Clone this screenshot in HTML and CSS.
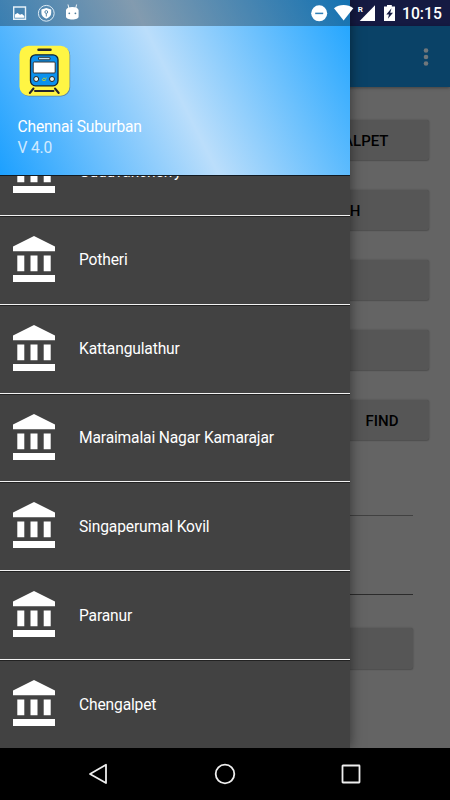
FILE: index.html
```html
<!DOCTYPE html>
<html lang="en">
<head>
    <meta charset="UTF-8">
    <meta name="viewport" content="width=device-width, initial-scale=1.0">
    <title>Chennai Suburban</title>
    <link rel="stylesheet" href="styles.css">
</head>
<body>

    <!-- shared icon for the station rows -->
    <svg class="defs" width="0" height="0">
        <symbol id="station" viewBox="0 0 42 46">
            <path d="M21 0L42 10.500V15.300H0V10.500ZM4.300 19.500H11.300V35.300H4.300ZM17.500 19.500H24.500V35.300H17.500ZM30.700 19.500H37.700V35.300H30.700ZM0 39H42V46H0Z"/>
        </symbol>
    </svg>

    <div class="screen">
        <div class="page">
            <div class="status-bg"></div>
            <div class="appbar">
                <svg width="6" height="20" viewBox="0 0 6 20">
                    <circle cx="3" cy="3.500" r="2.300"/>
                    <circle cx="3" cy="10" r="2.300"/>
                    <circle cx="3" cy="16.500" r="2.300"/>
                </svg>
            </div>
            <div class="content">
                <button class="btn"><span class="to">CHENGALPET</span></button>
                <button class="btn"><span class="search">SEARCH</span></button>
                <button class="btn"></button>
                <button class="btn"></button>
                <button class="btn"><span class="find">FIND</span></button>
                <div class="field soft"></div>
                <div class="field"></div>
                <button class="btn wide"></button>
            </div>
        </div>

        <div class="drawer">
            <div class="drawer-header">
                <svg class="logo" width="52" height="52" viewBox="0 0 52 52">
                    <rect x="1.200" y="1.400" width="50" height="50" rx="9" fill="#5c7180" opacity=".7"/>
                    <rect x=".5" y=".7" width="50" height="50" rx="9" fill="#fff544"/>
                    <path d="M19.500 4.800H31.500" stroke="#25252b" stroke-width="2.500" stroke-linecap="round"/>
                    <rect x="11.500" y="9.800" width="27.500" height="31" rx="5" fill="#0b91ee" stroke="#15242f" stroke-width="1.300"/>
                    <rect x="19.500" y="12.300" width="11.500" height="2.500" rx=".7" fill="#c9e4ee" stroke="#222" stroke-width=".9"/>
                    <rect x="14.200" y="17" width="22" height="11" rx="1" fill="#fff" stroke="#333" stroke-width="1"/>
                    <circle cx="17.200" cy="34" r="2.500" fill="#e9f4ee" stroke="#222" stroke-width="1"/>
                    <circle cx="33" cy="34" r="2.500" fill="#e9f4ee" stroke="#222" stroke-width="1"/>
                    <path d="M23 35L25 32.800L26.500 34.500L27.300 32.500M23.500 35.500H26.500" fill="none" stroke="#a5c94a" stroke-width="1"/>
                    <path d="M14.500 43.500L10.800 48M36 43.500L39.700 48M16 46H34.500" fill="none" stroke="#25252b" stroke-width="2" stroke-linecap="round"/>
                </svg>
                <div class="app-name">Chennai Suburban</div>
                <div class="version">V 4.0</div>
            </div>
            <div class="stations">
                <div class="station"><svg><use href="#station"/></svg><span>Guduvancherry</span></div>
                <div class="station"><svg><use href="#station"/></svg><span>Potheri</span></div>
                <div class="station"><svg><use href="#station"/></svg><span>Kattangulathur</span></div>
                <div class="station"><svg><use href="#station"/></svg><span>Maraimalai Nagar Kamarajar</span></div>
                <div class="station"><svg><use href="#station"/></svg><span>Singaperumal Kovil</span></div>
                <div class="station"><svg><use href="#station"/></svg><span>Paranur</span></div>
                <div class="station"><svg><use href="#station"/></svg><span>Chengalpet</span></div>
            </div>
        </div>

        <div class="statusbar">
            <svg width="80" height="26" viewBox="0 0 80 26">
                <path d="M13.700 7H25.500V19.300H13.700Z" fill="none" stroke="#e4f0f8" stroke-width="1.400"/>
                <path d="M15 17.800V14.500L17.500 13L20 14.700L22 14L24.300 16V17.800Z" fill="#fff"/>
                <circle cx="46.300" cy="13.300" r="7.900" fill="none" stroke="#dcebf5" stroke-width="1"/>
                <path d="M46.300 8L51.200 9.500V13C51.200 15.800 49 17.500 46.300 18.800C43.600 17.500 41.400 15.800 41.400 13V9.500Z" fill="#fff"/>
                <circle cx="46.300" cy="12" r="1.400" fill="none" stroke="#44799f" stroke-width=".9"/>
                <path d="M46.300 13.400V16.500" stroke="#44799f" stroke-width=".9"/>
                <path d="M68.800 8L68 4.500M75.800 8L76.600 4.500" fill="none" stroke="#fff" stroke-width=".9"/>
                <path d="M66 10C66.500 8 69 7 72.300 7S78.100 8 78.600 10V16.500C78.600 18.500 76 19.500 72.300 19.500S66 18.500 66 16.500Z" fill="#fff"/>
                <circle cx="69.300" cy="13.300" r=".9" fill="#527f9d"/>
                <circle cx="75.400" cy="13.300" r=".9" fill="#527f9d"/>
            </svg>
            <svg width="90" height="26" viewBox="308 0 90 26">
                <circle cx="319.200" cy="13.300" r="8" fill="#fff"/>
                <path d="M315.200 13.400H323.200" stroke="#2f7fb7" stroke-width="1.500"/>
                <path d="M334 8.300C339.500 4 347.800 4 353.300 8.300L343.600 20.600Z" fill="#fff"/>
                <path d="M375 5.300V20.900H359.700Z" fill="#fff"/>
                <text class="roaming" x="357.800" y="11.900">R</text>
                <path d="M387 5H391.800V6.500H395V21H384V6.500H387Z" fill="#fff"/>
                <path d="M391.500 8.300L386.300 14.400H389L387.900 18.700L393 12.700H390.200Z" fill="#151a42"/>
            </svg>
            <span class="clock">10:15</span>
        </div>

        <div class="navbar">
            <svg width="20" height="22" viewBox="0 0 20 22"><path d="M18 1.800V20L2 11Z"/></svg>
            <svg width="22" height="22" viewBox="0 0 22 22"><circle cx="11" cy="11" r="9.300"/></svg>
            <svg width="20" height="20" viewBox="0 0 20 20"><rect x="1.500" y="1.500" width="17" height="17" rx=".4"/></svg>
        </div>
    </div>

</body>
</html>
```
FILE: styles.css
```css
body {
    margin: 0;
    font-family: Roboto, sans-serif;
    background-color: black;
}
.defs {
    position: absolute;
}
.screen {
    position: relative;
    display: flex;
    flex-direction: column;
    width: 450px;
    height: 800px;
    overflow: hidden;
}

/* page under the drawer, already dimmed */
.page {
    height: 748px;
    background-color: #646464;
}
.status-bg {
    height: 26px;
    background-color: #151a42;
}
.appbar {
    display: flex;
    align-items: center;
    justify-content: flex-end;
    height: 61px;
    box-sizing: border-box;
    padding-right: 21px;
    background-color: #0a4267;
    box-shadow: 0 1px 3px rgba(0, 0, 0, 0.35);
}
.appbar svg {
    fill: #70777b;
}
.content {
    display: flex;
    flex-direction: column;
    align-items: flex-end;
    padding: 33px 21.5px 0;
}
.btn {
    width: 190px;
    height: 40px;
    margin: 0 0 30px;
    padding: 1px 0 0;
    border: 0;
    border-radius: 2px;
    background-color: #565656;
    box-shadow: 0 0 2px rgba(0, 0, 0, 0.25), 0 1px 1px rgba(0, 0, 0, 0.15);
    color: black;
    font-family: inherit;
    font-size: 15px;
    font-weight: 500;
    text-align: right;
}
.to {
    margin-right: 40px;
}
.search {
    margin-right: 68px;
}
.find {
    margin-right: 30px;
}
.field {
    width: 380px;
    height: 78px;
    margin-right: 15.5px;
    border-bottom: 1px solid #2b2b2b;
}
.field.soft {
    height: 45px;
    border-bottom-color: #414141;
}
.btn.wide {
    width: 380px;
    height: 41px;
    margin: 33px 15.5px 0 0;
}

.drawer {
    position: absolute;
    top: 0;
    left: 0;
    display: flex;
    flex-direction: column;
    width: 350px;
    height: 748px;
    background-color: #424242;
    box-shadow: 0 0 12px rgba(0, 0, 0, 0.5);
}
.drawer-header {
    flex: none;
    height: 176px;
    box-sizing: border-box;
    padding: 45px 17.5px 0;
    background: linear-gradient(63.3deg, #1ca0ff, #bbdefb 50%, #1ca3ff);
    border-bottom: 1px solid #111a22;
    color: white;
    font-size: 15.6px;
    letter-spacing: -0.15px;
    line-height: 21px;
}
.logo {
    display: block;
    margin: 0 0 20px 1px;
}
.version {
    opacity: 0.75;
}
.stations {
    display: flex;
    flex: 1;
    flex-direction: column;
    justify-content: flex-end;
    min-height: 0;
    overflow: hidden;
}
.station {
    display: flex;
    flex: none;
    align-items: center;
    gap: 24px;
    height: 88.8px;
    box-sizing: border-box;
    padding: 0 0 2px 13px;
    border-bottom: 1px solid #f2f2f2;
    box-shadow: 0 1px 0 #222;
    color: white;
    font-size: 15.6px;
    letter-spacing: -0.15px;
}
.station:last-child {
    height: 88px;
    border-bottom: 0;
}
.station svg {
    width: 42px;
    height: 46px;
    fill: white;
}
.station span {
    padding-top: 3px;
}

.statusbar {
    position: absolute;
    top: 0;
    left: 0;
    display: flex;
    align-items: center;
    width: 450px;
    height: 26px;
    /* tint only the part that covers the drawer */
    background: linear-gradient(rgba(0, 0, 0, 0.3), rgba(0, 0, 0, 0.3)) no-repeat 0 0 / 350px 26px;
}
.statusbar svg + svg {
    margin-left: 228px;
}
.roaming {
    fill: white;
    font-size: 8px;
    font-weight: 700;
}
.clock {
    margin: 1px 0 0 4px;
    color: white;
    font-size: 15.7px;
    font-weight: 500;
}

.navbar {
    display: flex;
    align-items: center;
    justify-content: space-between;
    height: 52px;
    box-sizing: border-box;
    padding: 0 89px 0 88px;
    background-color: black;
}
.navbar svg {
    fill: none;
    stroke: #eee;
    stroke-width: 1.8;
    stroke-linejoin: round;
}
```
